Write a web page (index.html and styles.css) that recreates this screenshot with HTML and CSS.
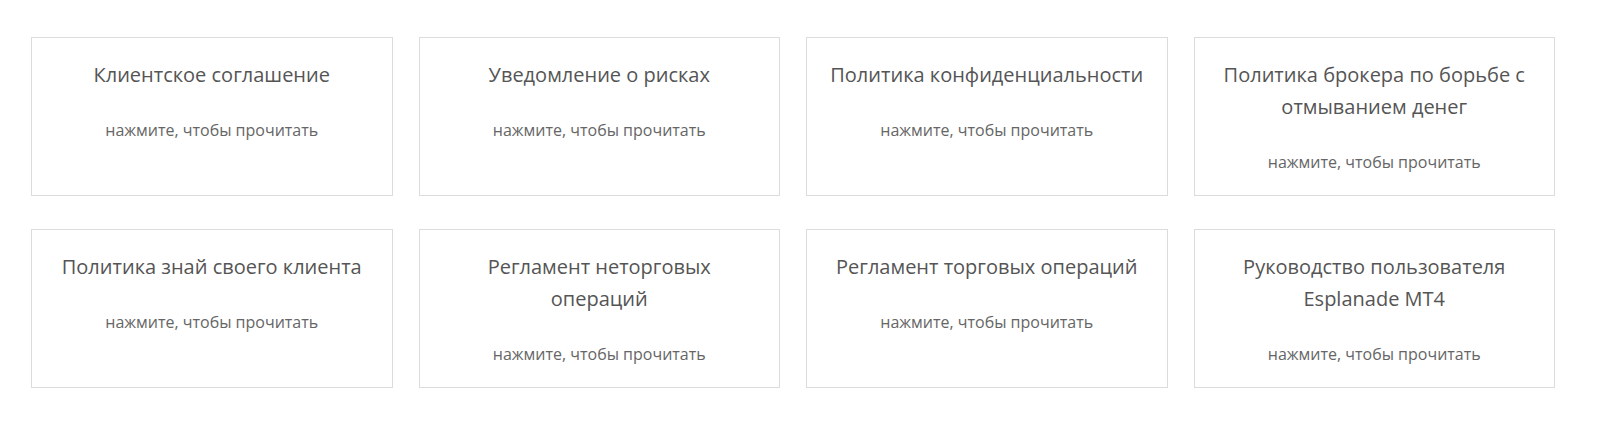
FILE: index.html
```html
<!DOCTYPE html>
<html>
<head>
    <meta charset="UTF-8">
    <title>Документы</title>
    <link rel="stylesheet" href="styles.css">
</head>
<body>
    <div class="docs">
        <a href="#" class="doc">
            <div class="doc-title">Клиентское соглашение</div>
            <div class="doc-hint">нажмите, чтобы прочитать</div>
        </a>
        <a href="#" class="doc">
            <div class="doc-title">Уведомление о рисках</div>
            <div class="doc-hint">нажмите, чтобы прочитать</div>
        </a>
        <a href="#" class="doc">
            <div class="doc-title">Политика конфиденциальности</div>
            <div class="doc-hint">нажмите, чтобы прочитать</div>
        </a>
        <a href="#" class="doc">
            <div class="doc-title">Политика брокера по борьбе с отмыванием денег</div>
            <div class="doc-hint">нажмите, чтобы прочитать</div>
        </a>
        <a href="#" class="doc">
            <div class="doc-title">Политика знай своего клиента</div>
            <div class="doc-hint">нажмите, чтобы прочитать</div>
        </a>
        <a href="#" class="doc">
            <div class="doc-title">Регламент неторговых операций</div>
            <div class="doc-hint">нажмите, чтобы прочитать</div>
        </a>
        <a href="#" class="doc">
            <div class="doc-title">Регламент торговых операций</div>
            <div class="doc-hint">нажмите, чтобы прочитать</div>
        </a>
        <a href="#" class="doc">
            <div class="doc-title">Руководство пользователя Esplanade MT4</div>
            <div class="doc-hint">нажмите, чтобы прочитать</div>
        </a>
    </div>
</body>
</html>
```

FILE: styles.css
```css
body {
    font-family: "Open Sans", "Liberation Sans", sans-serif;
    background-color: #fff;
    margin: 0;
    padding: 0;
}
.docs {
    display: grid;
    grid-template-columns: repeat(4, 1fr);
    column-gap: 26px;
    row-gap: 33px;
    width: 1524px;
    margin: 37px 0 0 31px;
}
.doc {
    display: block;
    border: 1px solid #dcdcdc;
    padding: 21px 18px 22px;
    text-align: center;
    text-decoration: none;
}
.doc-title {
    font-size: 20px;
    line-height: 32px;
    color: #555;
    margin-bottom: 28px;
}
.doc-hint {
    font-size: 16px;
    line-height: 22px;
    color: #666;
}
```
